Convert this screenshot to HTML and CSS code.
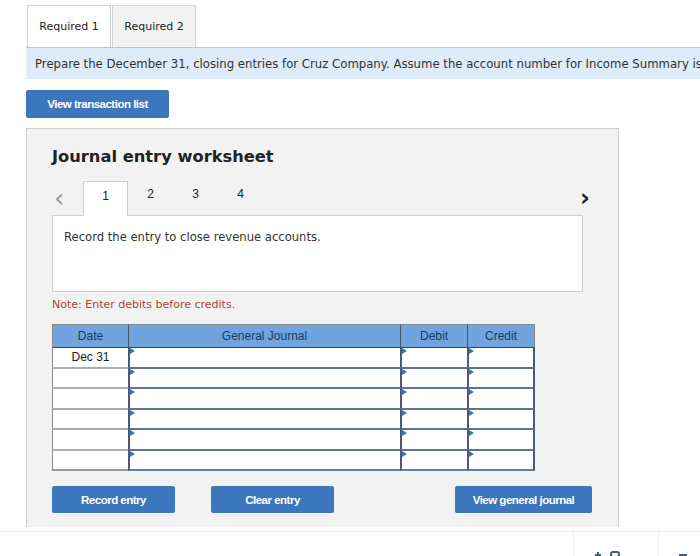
FILE: index.html
```html
<!DOCTYPE html>
<html lang="en">
<head>
  <meta charset="UTF-8">
  <title>Journal entry worksheet</title>
  <link rel="stylesheet" href="styles.css">
</head>
<body>
  <div class="tabs">
    <div class="tab active">Required 1</div>
    <div class="tab">Required 2</div>
  </div>
  <div class="info">Prepare the December 31, closing entries for Cruz Company. Assume the account number for Income Summary is</div>

  <div class="top-actions">
    <button class="btn btn-wide">View transaction list</button>
  </div>

  <div class="panel">
    <h2>Journal entry worksheet</h2>

    <div class="steps">
      <span class="arrow prev">&lsaquo;</span>
      <div class="step current">1</div>
      <div class="step">2</div>
      <div class="step">3</div>
      <div class="step">4</div>
      <span class="arrow next">&rsaquo;</span>
    </div>
    <div class="step-box">Record the entry to close revenue accounts.</div>

    <p class="note">Note: Enter debits before credits.</p>

    <table class="journal">
      <thead>
        <tr>
          <th class="c-date">Date</th>
          <th class="c-acct">General Journal</th>
          <th class="c-num">Debit</th>
          <th class="c-num">Credit</th>
        </tr>
      </thead>
      <tbody>
        <tr><td class="c-date">Dec 31</td><td class="inp"></td><td class="inp"></td><td class="inp"></td></tr>
        <tr><td class="c-date"></td><td class="inp"></td><td class="inp"></td><td class="inp"></td></tr>
        <tr><td class="c-date"></td><td class="inp"></td><td class="inp"></td><td class="inp"></td></tr>
        <tr><td class="c-date"></td><td class="inp"></td><td class="inp"></td><td class="inp"></td></tr>
        <tr><td class="c-date"></td><td class="inp"></td><td class="inp"></td><td class="inp"></td></tr>
        <tr><td class="c-date"></td><td class="inp"></td><td class="inp"></td><td class="inp"></td></tr>
      </tbody>
    </table>

    <div class="actions">
      <button class="btn">Record entry</button>
      <button class="btn">Clear entry</button>
      <button class="btn btn-journal">View general journal</button>
    </div>
  </div>

  <div class="footer">
    <div class="foot-cell"></div>
    <div class="foot-cell icons">
      <svg width="40" height="25" viewBox="0 0 40 25"><rect x="5" y="20" width="2" height="5" fill="#4a5d78"/><rect x="3" y="22" width="6" height="2" fill="#4a5d78"/><rect x="19" y="20" width="8" height="5" rx="2" fill="none" stroke="#4a5d78" stroke-width="2"/></svg>
    </div>
    <div class="foot-cell icons last">
      <svg width="20" height="25" viewBox="0 0 20 25"><rect x="6" y="22" width="8" height="2" fill="#4a5d78"/></svg>
    </div>
  </div>
</body>
</html>
```

FILE: styles.css
```css
body { margin: 0; width: 700px; overflow: hidden; font-family: "DejaVu Sans", Verdana, sans-serif; font-size: 11px; color: #333; background: #fff; }

.tabs { display: flex; gap: 1px; padding: 5px 0 0 27px; }
.tab { width: 82px; height: 41px; line-height: 41px; text-align: center; border: 1px solid #d6d6d6; border-bottom: none; background: #f2f2f2; color: #222; }
.tab.active { background: #fff; border-color: #cfcfcf; }

.info { margin-left: 26px; height: 32px; line-height: 32px; padding-left: 9px; background: #deebf8; border-top: 1px solid #c4c4c4; white-space: nowrap; overflow: hidden; color: #333; box-sizing: border-box; font-size: 11.7px; }

.top-actions { padding: 11px 0 0 26px; }
.btn { height: 27px; width: 123px; border: none; border-radius: 2px; background: #3c76bd; color: #fff; font-family: "Liberation Sans", Arial, sans-serif; font-weight: bold; font-size: 11.5px; letter-spacing: -0.5px; cursor: pointer; padding: 0; }
.btn-wide { width: 143px; height: 28px; }
.btn-journal { width: 137px; margin-left: auto; }

.panel { margin: 10px 0 0 26px; width: 566px; height: 398px; padding: 0 0 0 25px; background: #f2f2f2; border: 1px solid #cfcfcf; border-bottom: none; }
.panel h2 { margin: 0; padding-top: 17px; font-size: 16.3px; font-weight: bold; color: #222; line-height: 22px; }

.steps { display: flex; align-items: flex-end; margin-top: 12px; height: 35px; width: 538px; }
.arrow { font-size: 26px; line-height: 30px; width: 29px; padding-left: 2px; color: #999; align-self: center; }
.arrow.next { margin-left: auto; color: #222; width: auto; padding: 0; font-weight: bold; font-size: 24px; }
.step { width: 45px; height: 35px; line-height: 28px; text-align: center; font-family: "Liberation Sans", Arial, sans-serif; font-size: 12px; color: #222; }
.step.current { background: #fff; border: 1px solid #cfcfcf; border-bottom: none; height: 35px; box-sizing: border-box; position: relative; top: 1px; }
.step-box { width: 531px; height: 77px; box-sizing: border-box; background: #fff; border: 1px solid #cfcfcf; padding: 14px 0 0 11px; color: #333; font-size: 11.6px; }

.note { margin: 6px 0 0; color: #a94442; line-height: 14px; }

.journal { margin-top: 12px; border-collapse: separate; border-spacing: 0; font-family: "Liberation Sans", Arial, sans-serif; font-size: 12px; }
.journal th { height: 22px; padding: 0; background: #6fa4de; color: #1b3961; font-weight: normal; border-top: 1px solid #8a8a8a; border-left: 1px solid #3f5570; }
.journal th.c-date { border-left: 1px solid #8a8a8a; }
.journal th:last-child { border-right: 1px solid #8a8a8a; }
.journal td { height: 18.5px; padding: 0; background: #fff; }
.c-date { width: 75px; text-align: center; }
.c-acct { width: 271px; }
.c-num { width: 66px; }
.journal td.c-date { border-left: 1px solid #8a8a8a; border-top: 2px solid #aeaeae; color: #222; }
.journal td.inp { position: relative; border-left: 2px solid #4c5b6e; border-top: 2px solid #5d7392; }
.journal td.inp:last-child { border-right: 2px solid #4c5b6e; }
.journal tbody tr:first-child td { border-top-width: 1px; border-top-color: #2f4868; }
.journal tbody tr:last-child td { border-bottom: 2px solid #6d7f96; }
.journal td.c-date { border-bottom-color: #9a9a9a !important; }
.journal td.inp::before { content: ""; position: absolute; left: 0; top: 0; border-left: 5px solid #3e70b3; border-top: 3px solid transparent; border-bottom: 3px solid transparent; }

.actions { display: flex; gap: 36px; width: 540px; margin-top: 15px; }

.footer { display: flex; height: 26px; margin-top: 4px; border-top: 1px solid #ececec; }
.foot-cell { flex: 1; }
.foot-cell.icons { flex: none; width: 85px; border-left: 1px solid #eee; padding-left: 18px; box-sizing: border-box; }
.foot-cell.icons.last { width: 42px; padding-left: 14px; }
```
